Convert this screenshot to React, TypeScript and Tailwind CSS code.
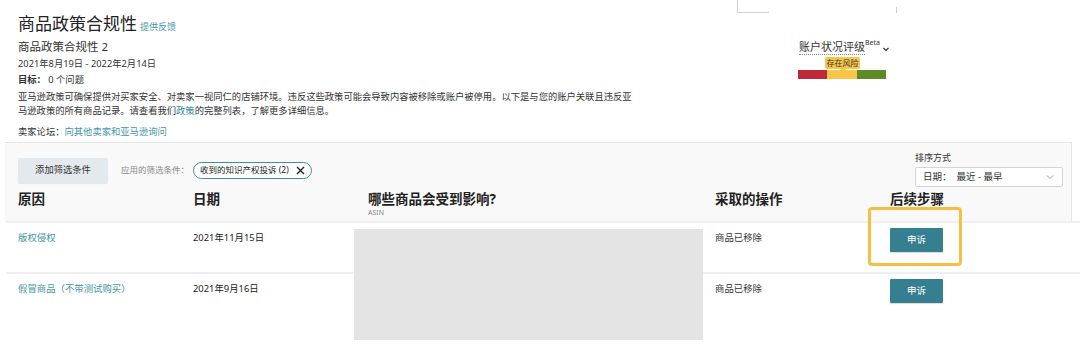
import React from 'react';

const font = { fontFamily: '"Noto Sans", "Noto Sans CJK SC", sans-serif' };

const rows = [
  { reason: '版权侵权', date: '2021年11月15日', action: '商品已移除', highlight: true },
  { reason: '假冒商品（不带测试购买）', date: '2021年9月16日', action: '商品已移除', highlight: false },
];

export default function App() {
  return (
    <div className="w-[1080px] h-[348px] overflow-hidden bg-white text-[#333]" style={font}>
      {/* HEADER */}
      <div className="flex h-[142px]">
        <div className="pl-[18px] w-[720px]">
          <div className="flex items-baseline gap-[3px] pt-[13px]">
            <h1 className="text-[17px] leading-[22px] text-[#222]">商品政策合规性</h1>
            <a className="text-[9px] text-[#4596a6]">提供反馈</a>
          </div>
          <div className="text-[11.5px] leading-[16px] text-[#333] mt-[4px]">商品政策合规性 2</div>
          <div className="text-[9.3px] leading-[14px] text-[#333] mt-[2px]">2021年8月19日 - 2022年2月14日</div>
          <div className="text-[9.3px] leading-[14px] text-[#333] mt-[2px]">
            <span className="font-bold">目标：</span> 0 个问题
          </div>
          <p className="text-[9.3px] leading-[14px] text-[#333] w-[618px] mt-[3px]">
            亚马逊政策可确保提供对买家安全、对卖家一视同仁的店铺环境。违反这些政策可能会导致内容被移除或账户被停用。以下是与您的账户关联且违反亚马逊政策的所有商品记录。请查看我们<span className="text-[#2c8a9c]">政策</span>的完整列表，了解更多详细信息。
          </p>
          <div className="text-[9.3px] leading-[14px] mt-[7px]">
            卖家论坛：<span className="text-[#4596a6]">向其他卖家和亚马逊询问</span>
          </div>
        </div>

        {/* ACCOUNT HEALTH */}
        <div className="ml-[17px] w-[160px]">
          <div className="flex justify-between h-[13px]">
            <div className="w-[32px] h-[13px] border-l border-b border-[#d0d0d0]" />
            <div className="w-px h-[6px] mt-[7px] bg-[#d0d0d0]" />
          </div>
          <div className="ml-[62px] mt-[27px] w-[100px]">
            <div className="flex items-start text-[11px] leading-[14px] text-[#333]">
              <span className="border-b border-dotted border-[#888]">账户状况评级</span>
              <span className="text-[7px] leading-[8px] -mt-[1px]">Beta</span>
              <svg width="8" height="8" viewBox="0 0 8 8" className="ml-[2px] mt-[5px]">
                <path d="M1.5 3 L4 5.5 L6.5 3" stroke="#333" strokeWidth="1.2" fill="none" />
              </svg>
            </div>
            <div className="relative ml-[26px] mt-[2px] w-[35px] h-[12px] bg-[#f7c548] rounded-[2px] text-[8px] leading-[12px] text-center text-[#333]">
              存在风险
              <div className="absolute left-[15px] -bottom-[3px] w-0 h-0 border-l-[3px] border-r-[3px] border-t-[3px] border-l-transparent border-r-transparent border-t-[#f7c548]" />
            </div>
            <div className="flex mt-px h-[9px] w-[88px] -ml-px">
              <div className="flex-1 bg-[#c0283a]" />
              <div className="flex-1 bg-[#f7c548]" />
              <div className="flex-1 bg-[#5b8a26]" />
            </div>
          </div>
        </div>
      </div>

      {/* FILTER PANEL */}
      <div className="ml-[5px] mr-[8px] bg-[#f9f9f9] border-t border-r border-[#e6e6e6] h-[79px] px-[13px]">
        <div className="flex justify-between h-[47px]">
          <div className="flex items-center mt-[14px] h-[26px]">
            <button className="w-[90px] h-[25px] bg-[#e3e9ec] rounded-[2px] text-[9.3px] text-[#333] shadow-[0_1px_1px_rgba(0,0,0,0.08)]">
              添加筛选条件
            </button>
            <span className="ml-[13px] text-[8.5px] text-[#888]">应用的筛选条件：</span>
            <span className="ml-[4px] flex items-center h-[17px] px-[6px] rounded-full border-[1.5px] border-[#3e8e9d] bg-white text-[8.5px] text-[#222]">
              收到的知识产权投诉 (2)
              <svg width="9" height="9" viewBox="0 0 9 9" className="ml-[7px]">
                <path d="M1 1 L8 8 M8 1 L1 8" stroke="#222" strokeWidth="1.4" />
              </svg>
            </span>
          </div>
          <div className="mt-[9px] mr-[-5px]">
            <div className="text-[9px] leading-[12px] text-[#333]">排序方式</div>
            <div className="mt-[3px] w-[148px] h-[20px] bg-white border border-[#d5d5d5] rounded-[2px] flex items-center justify-between pl-[7px] pr-[8px] text-[9.5px] text-[#333]">
              <span>日期：&nbsp;&nbsp;最近 - 最早</span>
              <svg width="8" height="8" viewBox="0 0 8 8">
                <path d="M1 2.5 L4 5.5 L7 2.5" stroke="#999" strokeWidth="1" fill="none" />
              </svg>
            </div>
          </div>
        </div>
        <div className="grid grid-cols-[175px_175px_347px_175px_1fr] text-[13.5px] font-bold text-[#222] leading-[18px]">
          <div>原因</div>
          <div>日期</div>
          <div>
            哪些商品会受到影响?
            <div className="text-[7px] leading-[9px] font-normal text-[#888]">ASIN</div>
          </div>
          <div>采取的操作</div>
          <div>后续步骤</div>
        </div>
      </div>

      {/* ROWS */}
      <div className="relative ml-[6px]">
        {rows.map((r, i) => (
          <div
            key={i}
            className="grid grid-cols-[175px_175px_347px_175px_1fr] pl-[12px] border-t-[2px] border-[#f0f0f0] h-[51px] text-[9.4px] leading-[14px]"
          >
            <div className="pt-[8px] text-[#4596a6]">{r.reason}</div>
            <div className="pt-[8px] text-[#222]">{r.date}</div>
            <div />
            <div className="pt-[8px] text-[#333]">{r.action}</div>
            <div className="pt-[5px]">
              <div className="relative w-[53px] h-[24px]">
                {r.highlight && (
                  <div className="absolute -left-[22px] -top-[21px] w-[94px] h-[59px] border-[3px] border-[#f5bf42] rounded-[4px]" />
                )}
                <button className="w-[53px] h-[24px] bg-[#367f91] text-white text-[9.5px] rounded-[1px] shadow-[0_1px_1px_rgba(0,0,0,0.15)]">
                  申诉
                </button>
              </div>
            </div>
          </div>
        ))}
        {/* redacted ASIN column */}
        <div className="absolute left-[348px] top-[8px] w-[349px] h-[111px] bg-[#e4e4e4]" />
      </div>
    </div>
  );
}
